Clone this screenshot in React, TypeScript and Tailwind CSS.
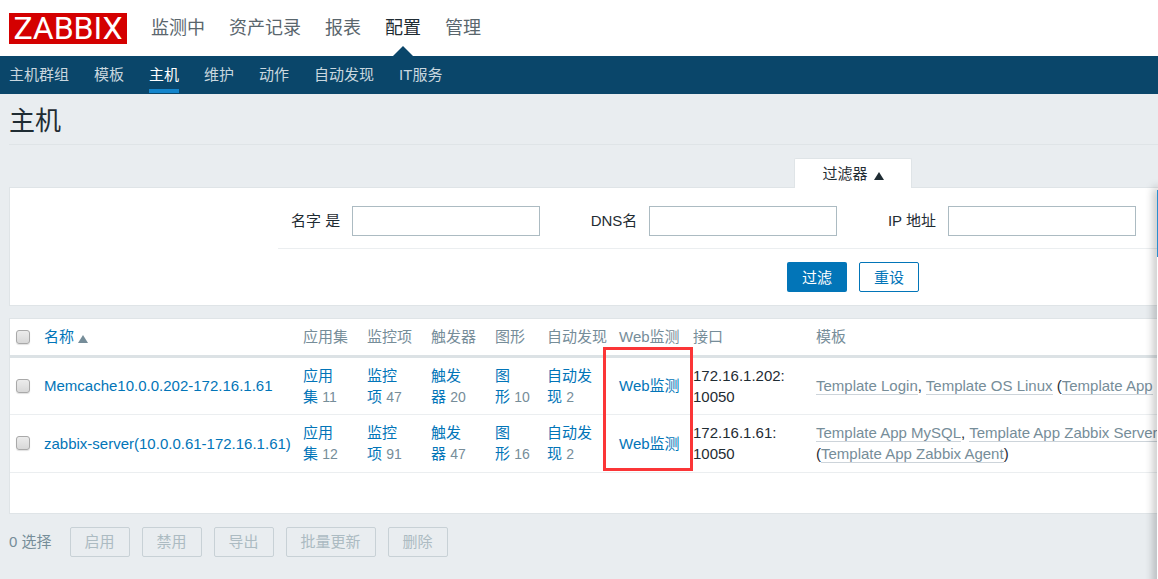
import { Fragment } from 'react';

const MAIN_MENU = ['监测中', '资产记录', '报表', '配置', '管理'];
const SUB_MENU = ['主机群组', '模板', '主机', '维护', '动作', '自动发现', 'IT服务'];
const BULK_ACTIONS = ['启用', '禁用', '导出', '批量更新', '删除'];

const FILTER_FIELDS = [
  { id: 'filter-host', label: '名字 是' },
  { id: 'filter-dns', label: 'DNS名' },
  { id: 'filter-ip', label: 'IP 地址' },
];

interface HostRow {
  name: string;
  counts: { label: string; count: number }[];
  address: string;
  templates: string[];
  linked: string; // template shown in parentheses
  linkedOnNewLine: boolean;
}

const HOSTS: HostRow[] = [
  {
    name: 'Memcache10.0.0.202-172.16.1.61',
    counts: [
      { label: '应用集', count: 11 },
      { label: '监控项', count: 47 },
      { label: '触发器', count: 20 },
      { label: '图形', count: 10 },
      { label: '自动发现', count: 2 },
    ],
    address: '172.16.1.202:',
    templates: ['Template Login', 'Template OS Linux'],
    linked: 'Template App',
    linkedOnNewLine: false,
  },
  {
    name: 'zabbix-server(10.0.0.61-172.16.1.61)',
    counts: [
      { label: '应用集', count: 12 },
      { label: '监控项', count: 91 },
      { label: '触发器', count: 47 },
      { label: '图形', count: 16 },
      { label: '自动发现', count: 2 },
    ],
    address: '172.16.1.61:',
    templates: ['Template App MySQL', 'Template App Zabbix Server'],
    linked: 'Template App Zabbix Agent',
    linkedOnNewLine: true,
  },
];

function Checkbox({ label }: { label: string }) {
  return (
    <input
      type="checkbox"
      aria-label={label}
      className="block size-3.5 appearance-none rounded-[3px] border border-[#a9a9a9] bg-linear-to-b from-[#ececec] to-[#d8d8d8] shadow-[0_1px_1px_rgba(0,0,0,0.12)]"
    />
  );
}

function TemplateLink({ name }: { name: string }) {
  return (
    <a href="#" className="border-b border-[#cdd4da] text-[#768d99]">
      {name}
    </a>
  );
}

function Header() {
  return (
    <header>
      <div className="flex h-14 items-center gap-6 bg-white pl-[9px]">
        <a
          href="#"
          className="flex h-[31px] w-[118px] items-center justify-center bg-[#d40000] font-[Roboto,sans-serif] text-[32px] leading-none text-white"
        >
          ZABBIX
        </a>
        <nav className="flex h-full gap-6 text-lg">
          {MAIN_MENU.map((item) => (
            <a
              key={item}
              href="#"
              className={
                item === '配置'
                  ? 'relative flex items-center text-[#1f2c33]'
                  : 'flex items-center text-[#5a666d]'
              }
            >
              {item}
              {item === '配置' && (
                <svg
                  viewBox="0 0 20 10"
                  className="absolute bottom-0 left-1/2 h-2.5 w-5 -translate-x-1/2"
                  fill="#0a466a"
                >
                  <path d="M0 10 10 0l10 10z" />
                </svg>
              )}
            </a>
          ))}
        </nav>
      </div>
      <nav className="flex h-[38px] gap-[25px] bg-[#0a466a] pl-[9px]">
        {SUB_MENU.map((item) => (
          <a
            key={item}
            href="#"
            className={
              item === '主机'
                ? 'mb-px flex items-center border-b-4 border-[#1385cc] pt-1 text-white'
                : 'mb-px flex items-center border-b-4 border-transparent pt-1 text-[#c9d7df]'
            }
          >
            {item}
          </a>
        ))}
      </nav>
    </header>
  );
}

function Filter() {
  return (
    <form className="pt-[13px]">
      {/* Tab overlaps the panel's top border */}
      <div className="relative -mb-px ml-[785px] flex">
        <button
          type="button"
          className="flex h-[30px] w-[118px] items-center justify-center gap-1.5 rounded-t-xs border border-b-0 border-[#dfe4e7] bg-white"
        >
          过滤器
          <svg viewBox="0 0 10 8" className="mt-1 h-2 w-2.5" fill="#1f2c33">
            <path d="M0 8 5 0l5 8z" />
          </svg>
        </button>
      </div>
      <div className="border border-r-0 border-[#dfe4e7] bg-white">
        <div className="ml-[268px] flex h-[61px] justify-between border-b border-[#ebeef0] pt-[18px] pr-[22px] pl-[13px]">
          {FILTER_FIELDS.map((field) => (
            <div key={field.id} className="flex h-[30px] items-center gap-3">
              <label htmlFor={field.id} className="pb-0.5">
                {field.label}
              </label>
              <input
                id={field.id}
                type="text"
                className="h-[30px] w-[188px] border border-[#acbbc2] bg-white px-1"
              />
            </div>
          ))}
        </div>
        <div className="ml-[777px] flex gap-3 py-[13px]">
          <button type="submit" className="h-[30px] w-[60px] rounded-xs bg-[#0275b8] text-white">
            过滤
          </button>
          <button
            type="reset"
            className="h-[30px] w-[60px] rounded-xs border border-[#0275b8] bg-white text-[#0275b8]"
          >
            重设
          </button>
        </div>
      </div>
    </form>
  );
}

function HostTable() {
  return (
    <div className="mt-3 overflow-hidden border border-r-0 border-[#dfe4e7] bg-white pb-10">
      <table className="w-full table-fixed text-left">
        <colgroup>
          <col className="w-[34px]" />
          <col className="w-[259px]" />
          <col className="w-16" />
          <col className="w-16" />
          <col className="w-16" />
          <col className="w-[52px]" />
          <col className="w-[72px]" />
          <col className="w-[74px]" />
          <col className="w-[123px]" />
          <col />
        </colgroup>
        <thead>
          <tr className="h-[37px] border-b-3 border-[#dce2e5] whitespace-nowrap text-[#768d99] *:font-normal">
            <th className="pl-1.5">
              <Checkbox label="全选" />
            </th>
            <th>
              <a href="#" className="flex items-center gap-1 text-[#0275b8]">
                名称
                <svg viewBox="0 0 10 8" className="mt-1 h-2 w-2.5" fill="#768d99">
                  <path d="M0 8 5 0l5 8z" />
                </svg>
              </a>
            </th>
            <th>应用集</th>
            <th>监控项</th>
            <th>触发器</th>
            <th>图形</th>
            <th>自动发现</th>
            <th>Web监测</th>
            <th>接口</th>
            <th>模板</th>
          </tr>
        </thead>
        <tbody>
          {HOSTS.map((host) => (
            <tr key={host.name} className="h-[58px] border-b border-[#ebeef0]">
              <td className="pl-1.5">
                <Checkbox label={host.name} />
              </td>
              <td className="whitespace-nowrap">
                <a href="#" className="text-[#0275b8]">
                  {host.name}
                </a>
              </td>
              {host.counts.map((item) => (
                <td key={item.label}>
                  <a href="#" className="text-[#0275b8]">
                    {item.label.slice(0, -1)}
                    <br />
                    {item.label.slice(-1)}
                  </a>{' '}
                  <span className="text-sm leading-none text-[#768d99]">{item.count}</span>
                </td>
              ))}
              <td>
                <a href="#" className="text-[#0275b8]">
                  Web监测
                </a>
              </td>
              <td>
                {host.address}
                <br />
                10050
              </td>
              <td className="whitespace-nowrap">
                {host.templates.map((name, i) => (
                  <Fragment key={name}>
                    {i > 0 && ', '}
                    <TemplateLink name={name} />
                  </Fragment>
                ))}
                {host.linkedOnNewLine ? <br /> : ' '}
                (<TemplateLink name={host.linked} />
                {host.linkedOnNewLine && ')'}
              </td>
            </tr>
          ))}
        </tbody>
      </table>
    </div>
  );
}

export default function App() {
  return (
    <div className="relative min-h-screen overflow-hidden bg-[#e9edf0] font-['Liberation_Sans','Noto_Sans_CJK_SC',sans-serif] text-[15px] leading-[21px] text-[#1f2c33]">
      <Header />
      <main className="pl-[9px]">
        <h1 className="flex h-[51px] items-center border-b border-[#dfe4e7] pt-1 text-[26px]">
          主机
        </h1>
        <Filter />
        <HostTable />
        <div className="flex items-center gap-3 pt-[13px]">
          <span className="mr-1.5 text-[#768d99]">0 选择</span>
          {BULK_ACTIONS.map((action) => (
            <button
              key={action}
              type="button"
              disabled
              className="h-[30px] rounded-xs border border-[#c8d1d6] px-3.5 text-[#acbbc2]"
            >
              {action}
            </button>
          ))}
        </div>
      </main>
      {/* Highlight around the web monitoring column */}
      <div className="pointer-events-none absolute top-[347px] left-[603px] h-[124px] w-[90px] border-3 border-[#fb3537]" />
      {/* Edge of the overlapping side panel */}
      <div className="absolute top-[190px] right-0 -bottom-4 w-px bg-white shadow-[0_0_10px_2px_rgba(0,0,0,0.4)]">
        <div className="h-[67px] bg-[#2a8fd0]" />
      </div>
    </div>
  );
}
